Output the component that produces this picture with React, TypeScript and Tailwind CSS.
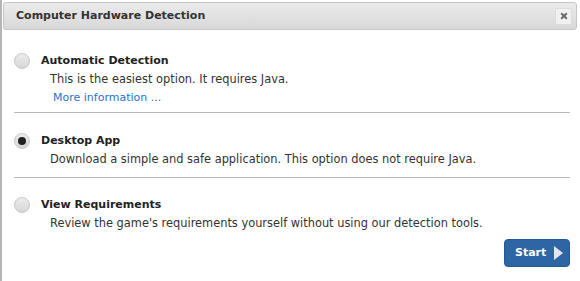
import React from "react";

function Radio({ checked }: { checked?: boolean }) {
  return (
    <div className="w-[16px] h-[16px] rounded-full border border-[#c8c8c8] bg-gradient-to-b from-[#ececec] to-[#d6d6d6] flex items-center justify-center shrink-0">
      {checked && <div className="w-[8px] h-[8px] rounded-full bg-[#222]" />}
    </div>
  );
}

function Option({
  title,
  desc,
  checked,
  link,
}: {
  title: string;
  desc: string;
  checked?: boolean;
  link?: string;
}) {
  return (
    <div className="flex items-start gap-[11px]">
      <div className="pt-[1px]">
        <Radio checked={checked} />
      </div>
      <div className="flex flex-col pt-[1px]">
        <div className="font-bold text-[11px] leading-[16px] text-[#222]">{title}</div>
        <div className="pl-[9px] pt-[1px] text-[11.4px] leading-[18px] text-[#333]">{desc}</div>
        {link && (
          <div className="pl-[12px] pt-[1px] text-[11px] leading-[17px] text-[#2a73c8]">{link}</div>
        )}
      </div>
    </div>
  );
}

export default function App() {
  return (
    <div
      className="w-[580px] h-[281px] bg-white border-l-2 border-[#b5b5b5] overflow-hidden"
      style={{ fontFamily: '"DejaVu Sans", Verdana, sans-serif' }}
    >
      <div className="pt-[2px] pl-[1px] pr-[3px]">
        <div className="h-[28px] rounded-[3px] border border-[#c6c6c6] bg-gradient-to-b from-[#ebebeb] to-[#d8d8d8] flex items-center justify-between pl-[12px] pr-[4px]">
          <span className="font-bold text-[11px] text-[#333] pt-[1px]">Computer Hardware Detection</span>
          <div className="w-[17px] h-[17px] rounded-[2px] bg-[#f1f1f1] border border-[#dcdcdc] flex items-center justify-center">
            <svg width="8" height="8" viewBox="0 0 8 8">
              <path d="M1.2 1.2 L6.8 6.8 M6.8 1.2 L1.2 6.8" stroke="#6a6a6a" strokeWidth="2" />
            </svg>
          </div>
        </div>
      </div>
      <div className="pl-[12px] pr-[10px] pt-[22px]">
        <Option
          title="Automatic Detection"
          desc="This is the easiest option. It requires Java."
          link="More information ..."
        />
        <div className="h-px bg-[#b9b9b9] mt-[6px] mb-[19px]" />
        <Option
          title="Desktop App"
          desc="Download a simple and safe application. This option does not require Java."
          checked
        />
        <div className="h-px bg-[#b9b9b9] mt-[9px] mb-[18px]" />
        <Option
          title="View Requirements"
          desc="Review the game's requirements yourself without using our detection tools."
        />
        <div className="flex justify-end mt-[7px]">
          <button className="h-[28px] w-[66px] rounded-[4px] bg-[#2e66a3] border border-[#245a93] flex items-center justify-between pl-[10px] pr-[6px] text-white font-bold text-[11px]">
            <span>Start</span>
            <svg width="9" height="14" viewBox="0 0 9 14">
              <path d="M0 0 L9 7 L0 14 Z" fill="#e6e6e6" />
            </svg>
          </button>
        </div>
      </div>
    </div>
  );
}
